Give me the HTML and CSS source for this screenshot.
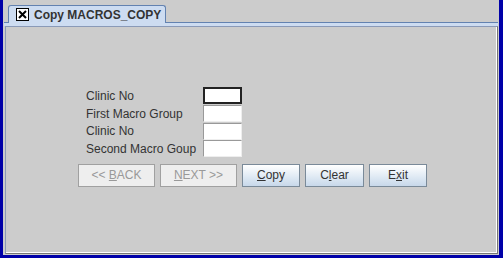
FILE: index.html
```html
<!DOCTYPE html>
<html lang="en">
<head>
  <meta charset="UTF-8">
  <title>Copy MACROS_COPY</title>
  <link rel="stylesheet" href="styles.css">
</head>
<body>
  <div class="window">
    <div class="tabs">
      <div class="tab">
        <span class="close-box">
          <svg width="13" height="13" viewBox="0 0 13 13">
            <rect x="0.5" y="0.5" width="12" height="12" fill="#fff" stroke="#000"/>
            <path d="M3 3 L10 10 M10 3 L3 10" stroke="#000" stroke-width="2"/>
          </svg>
        </span>
        Copy MACROS_COPY
      </div>
    </div>
    <div class="tab-line"></div>
    <div class="panel">
      <div class="form">
        <div class="row">
          <label>Clinic No</label>
          <input type="text" class="field focused">
        </div>
        <div class="row">
          <label>First Macro Group</label>
          <input type="text" class="field">
        </div>
        <div class="row">
          <label>Clinic No</label>
          <input type="text" class="field">
        </div>
        <div class="row">
          <label>Second Macro Goup</label>
          <input type="text" class="field">
        </div>
      </div>
      <div class="buttons">
        <button class="btn wide" disabled>&lt;&lt; <u>B</u>ACK</button>
        <button class="btn wide" disabled><u>N</u>EXT &gt;&gt;</button>
        <button class="btn"><u>C</u>opy</button>
        <button class="btn mid">C<u>l</u>ear</button>
        <button class="btn">E<u>x</u>it</button>
      </div>
    </div>
  </div>
</body>
</html>
```

FILE: styles.css
```css
body {
  margin: 0;
  padding: 0;
  background-color: #cccccc;
  font-family: 'Liberation Sans', Arial, sans-serif;
  font-size: 12px;
  color: #333;
}

.window {
  width: 503px;
  height: 258px;
  box-sizing: border-box;
  background-color: #cccccc;
  border-left: 3px solid #0000a8;
  border-right: 4px solid #0000a8;
  border-bottom: 3px solid #0000a8;
  padding-left: 1px;
  display: flex;
  flex-direction: column;
}

.tabs {
  height: 22px;
  padding-left: 4px;
  display: flex;
  align-items: flex-end;
}

.tab {
  height: 18px;
  width: 158px;
  box-sizing: border-box;
  background-color: #cddcf1;
  border: 1px solid #6382b0;
  border-bottom: none;
  border-radius: 3px 3px 0 0;
  padding-left: 7px;
  display: flex;
  align-items: center;
  gap: 5px;
  font-weight: bold;
  font-size: 12px;
  color: #333;
  position: relative;
  top: 1px;
}

.close-box {
  display: flex;
}

.tab-line {
  height: 3px;
  border-top: 1px solid #6382b0;
  background-color: #cddcf1;
  margin-right: 1px;
}

.panel {
  flex: 1;
  margin: 0 1px 1px 1px;
  border: 1px solid #8a9ab8;
  border-right-color: #777;
  border-bottom-color: #777;
  box-shadow: inset -1px -1px 0 #fff;
  padding-top: 60px;
  padding-left: 80px;
}

.form {
  display: flex;
  flex-direction: column;
}

.row {
  display: flex;
  align-items: center;
  height: 17.7px;
}

.row label {
  width: 117px;
  color: #333;
}

.field {
  width: 39px;
  height: 17px;
  box-sizing: border-box;
  margin: 0;
  padding: 0;
  background-color: #fff;
  border: 1px solid #999;
  border-right-color: #eee;
  border-bottom-color: #eee;
}

.field.focused {
  border: 2px solid #222;
}

.buttons {
  display: flex;
  gap: 5px;
  margin-top: 6px;
  margin-left: -8px;
}

.btn {
  width: 58px;
  height: 23px;
  box-sizing: border-box;
  padding: 0;
  font-family: 'Liberation Sans', Arial, sans-serif;
  font-size: 12px;
  color: #333;
  border: 1px solid #7a8a99;
  background: linear-gradient(#ffffff, #dde8f3 60%, #c8d8ea);
}

.btn.wide {
  width: 77px;
}

.btn.mid {
  width: 59px;
}

.btn:disabled {
  background: #eeeeee;
  border-color: #a0a0a0;
  color: #999;
}
```
